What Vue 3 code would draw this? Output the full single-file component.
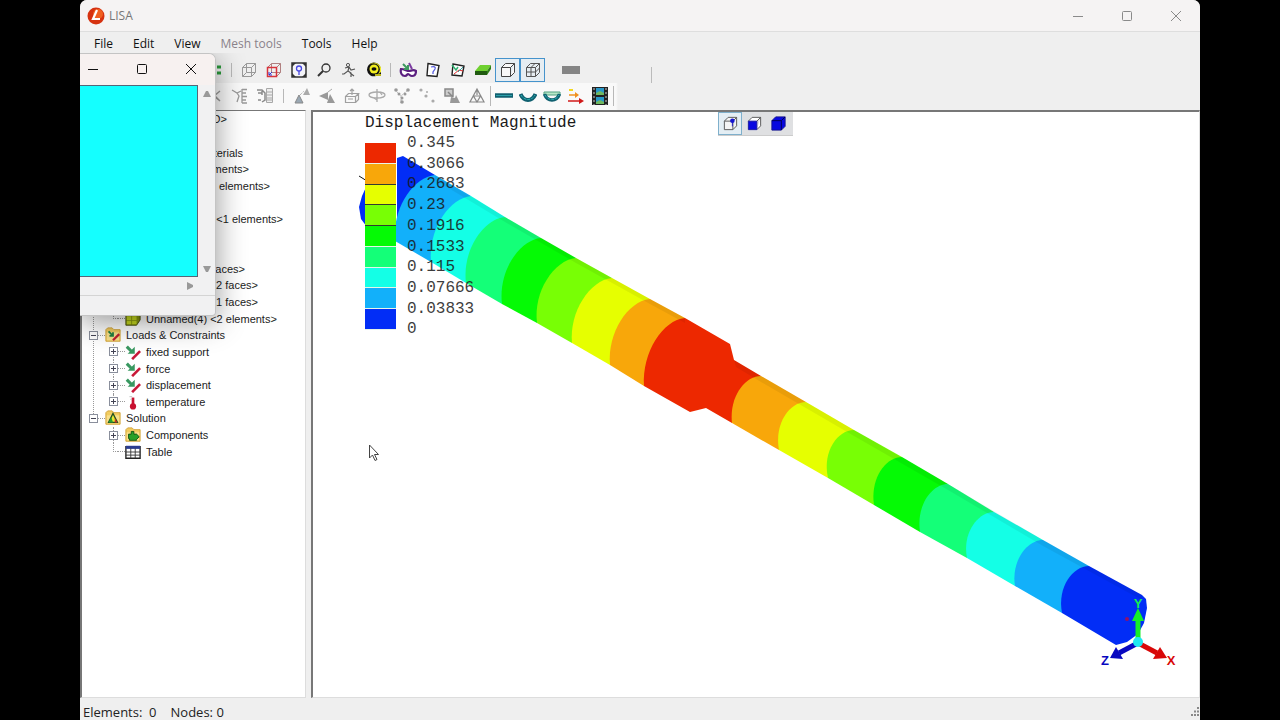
<script setup>
const menus = ['File', 'Edit', 'View', 'Mesh tools', 'Tools', 'Help']

const rowOne = [
  [{ id: 'refresh', t: 'Refresh' }],
  [
    { id: 'wire', t: 'Wireframe' }, { id: 'wireface', t: 'Select faces' }, { id: 'fit', t: 'Fit to window' },
    { id: 'lens', t: 'Zoom' }, { id: 'walk', t: 'Rotate' }, { id: 'tape', t: 'Tape measure' }
  ],
  [
    { id: 'mask', t: 'Show hidden' }, { id: 'nodeq', t: 'Node query' }, { id: 'elemq', t: 'Element query' },
    { id: 'slab', t: 'Shell thickness' }, { id: 'cube', t: 'Element surfaces', on: true }, { id: 'cubegrid', t: 'Element edges', on: true }
  ]
]
const rowTwo = [
  [{ id: 'cross', t: 'Delete' }, { id: 'split', t: 'Split' }, { id: 'list', t: 'List' }],
  [
    { id: 'tris', t: 'Move' }, { id: 'mirror', t: 'Mirror' }, { id: 'extrude', t: 'Extrude' }, { id: 'revolve', t: 'Revolve' },
    { id: 'merge', t: 'Merge nodes' }, { id: 'dots', t: 'Nodes' }, { id: 'scale', t: 'Scale' }, { id: 'refine', t: 'Refine' }
  ]
]
const results = [
  { id: 'flat', t: 'Undeformed' }, { id: 'bent', t: 'Deformed' }, { id: 'both', t: 'Both shapes' },
  { id: 'vectors', t: 'Vectors' }, { id: 'film', t: 'Animate' }
]
const viewModes = [{ id: 'pick', t: 'Select nodes', on: true }, { id: 'pickface', t: 'Select faces' }, { id: 'picksolid', t: 'Select elements' }]

const tree = [
  { tail: 'Analysis <3D>', end: 145 },
  {},
  { tail: 'Materials', end: 161 },
  { tail: '<2 elements>', end: 167 },
  { tail: '<8 elements>', end: 188 },
  {},
  { tail: '<1 elements>', end: 201 },
  {},
  {},
  { tail: '<3 faces>', end: 163 },
  { tail: '<2 faces>', end: 176 },
  { tail: '<1 faces>', end: 176 },
  { label: 'Unnamed(4) <2 elements>', icon: 'elems', level: 1, last: true },
  { label: 'Loads & Constraints', icon: 'loads', level: 0, box: '-' },
  { label: 'fixed support', icon: 'arrow', level: 1, box: '+' },
  { label: 'force', icon: 'arrow', level: 1, box: '+' },
  { label: 'displacement', icon: 'arrow', level: 1, box: '+' },
  { label: 'temperature', icon: 'thermo', level: 1, box: '+', last: true },
  { label: 'Solution', icon: 'solution', level: 0, box: '-' },
  { label: 'Components', icon: 'comp', level: 1, box: '+' },
  { label: 'Table', icon: 'table', level: 1, last: true }
]

const C = {
  red: '#ed2800', orange: '#f8a70a', yellow: '#e6ff00', lime: '#78ff05', green: '#05fa05',
  spring: '#14ff78', cyan: '#14ffe6', sky: '#12b0fa', blue: '#022df6'
}
const swatches = [C.red, C.orange, C.yellow, C.lime, C.green, C.spring, C.cyan, C.sky, C.blue]
const values = ['0.345', '0.3066', '0.2683', '0.23', '0.1916', '0.1533', '0.115', '0.07666', '0.03833', '0']

// Contour boundaries along the shaft: colour, top point, bottom point.
const thick = [
  [C.sky, 434, 174, 394, 240], [C.cyan, 470, 195, 430, 261], [C.spring, 504, 216, 465, 282],
  [C.green, 540, 237, 501, 303], [C.lime, 575, 257, 536, 322], [C.yellow, 611, 277, 571, 342],
  [C.orange, 649, 298, 609, 364], [C.red, 684, 317, 643, 385]
]
const thin = [
  [C.orange, 760, 375, 731, 422], [C.yellow, 805, 401, 778, 449], [C.lime, 853, 429, 827, 477],
  [C.green, 901, 456, 873, 504], [C.spring, 947, 483, 919, 531], [C.cyan, 993, 511, 966, 557],
  [C.sky, 1042, 539, 1014, 585], [C.blue, 1088, 565, 1061, 612]
]
const band = (list, tailPath, a, b) =>
  list.map(([color, tx, ty, bx, by], i) => {
    const n = list[i + 1]
    const rest = n ? `L${n[3]} ${n[4]}L${n[1]} ${n[2]}Z` : tailPath
    return { color, d: `M${tx} ${ty}C${tx - a[0]} ${ty + a[1]} ${tx - b[0]} ${ty + b[1]} ${bx} ${by}${rest}` }
  })
const bands = [
  { color: C.blue, d: 'M396 157L402 155L434 174L425 200L396 240Z' },
  ...band(thick, 'L689 411L705 407L731 422L760 375L733 359L729 343Z', [22, 2], [43, 34]),
  ...band(thin, 'L1115 644L1126 641L1137 633L1143 622L1146 607L1145 598L1141 594Z', [16, 0], [32, 21])
]
</script>

<template>
  <svg class="defs" aria-hidden="true">
    <defs>
      <symbol id="refresh" viewBox="0 0 18 18"><path d="M3 6h12M3 12h12" stroke="#2a9a3a" stroke-width="3" stroke-dasharray="7 1" /></symbol>
      <symbol id="wire" viewBox="0 0 18 18"><path d="M2.500 6.500h9v9h-9zM6.500 2.500h9v9h-9zM2.500 6.500l4-4M11.500 6.500l4-4M2.500 15.500l4-4M11.500 15.500l4-4" fill="none" stroke="#999" /></symbol>
      <symbol id="wireface" viewBox="0 0 18 18"><path d="M6.500 2.500h9v9h-9zM2.500 6.500l4-4M11.500 6.500l4-4M11.500 15.500l4-4" fill="none" stroke="#b08080" /><path d="M2.500 6.500h9v9h-9z" fill="none" stroke="#d8343c" stroke-width="1.500" /><path d="M4 14l3-3M4 11v3h3" fill="none" stroke="#3030d0" /></symbol>
      <symbol id="fit" viewBox="0 0 18 18"><path d="M2 2h14v14H2z" fill="#f4f4f8" stroke="#333" stroke-width="1.500" /><path d="M2 2h4L2 6zM16 2v4l-4-4zM2 16v-4l4 4zM16 16h-4l4-4z" fill="#333" /><circle cx="9" cy="7.500" r="2.500" fill="#eef" stroke="#4848e0" stroke-width="1.300" /><path d="M9 10v4" stroke="#4848e0" stroke-width="1.300" /></symbol>
      <symbol id="lens" viewBox="0 0 18 18"><circle cx="11" cy="7" r="4" fill="none" stroke="#333" stroke-width="1.300" /><path d="M8 10l-5 5" stroke="#333" stroke-width="2" /></symbol>
      <symbol id="walk" viewBox="0 0 18 18"><circle cx="8" cy="4" r="1.600" fill="none" stroke="#555" /><path d="M5 7l4-1 2 3 4-1M9 6l-1 4-4 3H2M8 10l3 2 0 4M10 12l4 3" fill="none" stroke="#555" stroke-width="1.200" /></symbol>
      <symbol id="tape" viewBox="0 0 18 18"><path d="M2 9a7 7 0 0 1 14-1v7h-5a7 7 0 0 1-9-6z" fill="#111" /><path d="M4 4a7 7 0 0 1 12 3v4a5 5 0 0 1-3 2 6 6 0 0 0-9-9z" fill="#f2ee20" /><circle cx="9" cy="8" r="4.500" fill="#f2ee20" /><ellipse cx="9" cy="8" rx="2.500" ry="1.800" fill="#111" /><path d="M10 14h6" stroke="#f2ee20" stroke-width="1.500" /></symbol>
      <symbol id="mask" viewBox="0 0 18 18"><path d="M2 8c-1 4 1 7 4 7 2 0 2-2 3-2s2 2 4 2c3 0 4-2 4-5-3-2-5 0-7 0S5 8 2 8z" fill="#fff" stroke="#5b2080" stroke-width="2.200" /><path d="M4 3l5 5M9 4v4H5" fill="none" stroke="#3e9860" stroke-width="2" /><path d="M10 2l3 6" stroke="#7a3aa0" stroke-width="2" /></symbol>
      <symbol id="nodeq" viewBox="0 0 18 18"><path d="M4 2.500l11 2-2 11-10-1z" fill="#fff" stroke="#222" stroke-width="1.400" /><path d="M7 6c3-1 5 0 4 2l-2 3v2" fill="none" stroke="#5a60e0" stroke-width="1.300" /></symbol>
      <symbol id="elemq" viewBox="0 0 18 18"><path d="M4 3l11 2-2 10-10-1z" fill="#fff" stroke="#222" stroke-width="1.400" /><path d="M3 4l4 5 2-3" fill="none" stroke="#30b070" stroke-width="1.500" /><path d="M5 13l5-4 4 1" fill="none" stroke="#e03030" /><path d="M9 11l5-5" stroke="#3aa0a0" /></symbol>
      <symbol id="slab" viewBox="0 0 18 18"><path d="M1 10l5-6h11l-4 6z" fill="#6fd030" /><path d="M1 10h12v4H1z" fill="#205a10" /><path d="M13 10l4-6v4l-4 6z" fill="#2f8018" /></symbol>
      <symbol id="cube" viewBox="0 0 18 18"><path d="M2.500 6.500h9v9h-9zM2.500 6.500l4-4h9l-4 4M15.500 2.500v9l-4 4" fill="#f8f8f8" stroke="#444" /></symbol>
      <symbol id="cubegrid" viewBox="0 0 18 18"><path d="M2.500 6.500h9v9h-9zM2.500 6.500l4-4h9l-4 4M15.500 2.500v9l-4 4M7 6.500v9M2.500 11h9M7 6.500l4-4M11.500 11l4-4" fill="none" stroke="#555" /></symbol>
      <symbol id="cross" viewBox="0 0 18 18"><path d="M4 4l10 10M14 4L8 9l6 5" stroke="#999" stroke-width="1.400" fill="none" /></symbol>
      <symbol id="split" viewBox="0 0 18 18"><path d="M1 3l5 3 4-2M6 6l2 3-2 6M11 2v14M11 2.500h5M11 6h4M11 9.500h5M11 13h4M11 16h5" stroke="#999" fill="none" stroke-width="1.300" /></symbol>
      <symbol id="list" viewBox="0 0 18 18"><path d="M1 3h5l3 3v7l-3 2M2 6h4M5 13H2M6 4v4" stroke="#8a8a8a" fill="none" stroke-width="1.500" /><path d="M10.500 1.500h6v14h-6zM11 5h5M11 8h5M11 11h5M11 13h5" fill="#eee" stroke="#a8a8a8" /></symbol>
      <symbol id="tris" viewBox="0 0 18 18"><path d="M2 16l4-8 4 8z" fill="#9aa8b4" stroke="#888" /><path d="M10 8l4-7 3 7z" fill="#aaa" /><path d="M7 8l4-4" stroke="#999" stroke-dasharray="1 1" /></symbol>
      <symbol id="mirror" viewBox="0 0 18 18"><path d="M1 9l9-4v8z" fill="#999" /><path d="M9 16l3-9 5 9z" fill="#999" /><path d="M10 5l4-3" stroke="#aaa" /></symbol>
      <symbol id="extrude" viewBox="0 0 18 18"><path d="M2.500 9.500h10v6h-10zM2.500 9.500l3-3h10l-3 3M15.500 6.500v6l-3 3M5 12h5M9 2v6M7 4l2-2 2 2" fill="none" stroke="#a0a0a0" stroke-width="1.200" /></symbol>
      <symbol id="revolve" viewBox="0 0 18 18"><ellipse cx="9" cy="8" rx="8" ry="3" fill="none" stroke="#aaa" stroke-width="1.300" /><path d="M9 2v13M6 11l3 2M12 5l2 3" stroke="#aaa" stroke-width="1.300" /></symbol>
      <symbol id="merge" viewBox="0 0 18 18"><path d="M2 3l6 6 7-6M8 9v7" stroke="#bbb" stroke-dasharray="2 1" fill="none" /><g fill="#999"><circle cx="3" cy="3" r="1.800" /><circle cx="15" cy="3" r="1.800" /><circle cx="6" cy="7" r="1.500" /><circle cx="12" cy="7" r="1.500" /><circle cx="9" cy="11" r="1.500" /><circle cx="9" cy="15" r="1.800" /></g></symbol>
      <symbol id="dots" viewBox="0 0 18 18"><g fill="#aaa"><circle cx="3" cy="3" r="1.600" /><circle cx="8" cy="9" r="1.600" /><circle cx="9" cy="5" r="1" /><circle cx="15" cy="14" r="1.600" /></g></symbol>
      <symbol id="scale" viewBox="0 0 18 18"><path d="M2 2h8v7H2z" fill="#ccc" stroke="#888" stroke-width="1.500" /><path d="M5 5l5 5" stroke="#888" stroke-width="1.500" /><path d="M7 16l1-6 4 1 1-3 4 8z" fill="#999" /></symbol>
      <symbol id="refine" viewBox="0 0 18 18"><path d="M9 2l7 13H2zM5.500 9h7L9 15zM9 2v6" fill="none" stroke="#888" stroke-width="1.200" /></symbol>
      <symbol id="flat" viewBox="0 0 18 18"><path d="M0 8.500h18" stroke="#116070" stroke-width="4.500" /><path d="M1 8.500h16" stroke="#2aa0a8" /></symbol>
      <symbol id="bent" viewBox="0 0 18 18"><path d="M1.500 7c3 8 12 8 15 0" fill="none" stroke="#106070" stroke-width="4" /><path d="M2 8c3 6 11 6 14 0" fill="none" stroke="#30b8b8" stroke-dasharray="3 1" /></symbol>
      <symbol id="both" viewBox="0 0 18 18"><path d="M1 5h16v3H1z" fill="#b8e8c8" stroke="#50a080" /><path d="M1.500 7c3 8 12 8 15 0" fill="none" stroke="#106070" stroke-width="3.500" /><path d="M2 8c3 6 11 6 14 0" fill="none" stroke="#30b8b8" stroke-dasharray="3 1" /></symbol>
      <symbol id="vectors" viewBox="0 0 18 18"><path d="M2 3h4" stroke="#f2d820" stroke-width="2" /><path d="M2 8h7" stroke="#f09020" stroke-width="1.500" /><path d="M8 5l4 3-4 3z" fill="#f09020" /><path d="M1 14h12" stroke="#d01818" stroke-width="1.500" /><path d="M12 11l5 3-5 3z" fill="#d01818" /></symbol>
      <symbol id="film" viewBox="0 0 18 18"><path d="M1 0h16v18H1z" fill="#222" /><path d="M5 1h8v7H5zM5 10h8v7H5z" fill="#2898c8" /><path d="M5 6l4-2 4 2v2H5zM5 15l4-2 4 2v2H5z" fill="#70b860" /><path d="M3 1v17M15 1v17" stroke="#ccc" stroke-width="1" stroke-dasharray="2 2" /></symbol>
      <symbol id="pick" viewBox="0 0 18 18"><path d="M2.500 6.500h9v9h-9zM2.500 6.500l4-4h9l-4 4M15.500 2.500v9l-4 4" fill="#f4f4f4" stroke="#555" /><path d="M11 7v5" stroke="#2020c0" /><circle cx="11" cy="6" r="2.400" fill="#1515d0" /></symbol>
      <symbol id="pickface" viewBox="0 0 18 18"><path d="M2.500 6.500l4-4h9l-4 4M15.500 2.500v9l-4 4" fill="#fff" stroke="#555" /><path d="M2.500 6.500h9v9h-9z" fill="#0808e0" stroke="#1818a0" /></symbol>
      <symbol id="picksolid" viewBox="0 0 18 18"><path d="M2 6l4-4h10v10l-4 4H2z" fill="#0808e0" stroke="#111090" /><path d="M2 6h10v10M12 6l4-4" stroke="#000050" fill="none" /></symbol>
      <symbol id="folder" viewBox="0 0 18 18"><path d="M1 3l2-2h5l2 2h7v13H1z" fill="#f2cc60" stroke="#d0a030" /><path d="M2 6h14v9H2z" fill="#f9e08c" /></symbol>
      <symbol id="loads" viewBox="0 0 18 18"><use href="#folder" /><path d="M4 5l5 5M9 6v4H5" stroke="#208040" stroke-width="2" fill="none" /><path d="M9 15l7-7" stroke="#c02030" stroke-width="2.500" /></symbol>
      <symbol id="arrow" viewBox="0 0 18 18"><path d="M2 3l6 6" stroke="#389860" stroke-width="3.500" /><path d="M11 3v8H3z" fill="#389860" /><path d="M8 17l9-9" stroke="#c81838" stroke-width="3" /></symbol>
      <symbol id="thermo" viewBox="0 0 18 18"><path d="M9 4v9" stroke="#c81030" stroke-width="3" /><circle cx="9" cy="14" r="3.500" fill="#c81030" /><path d="M5 3h3M6 6h2" stroke="#bbb" /></symbol>
      <symbol id="solution" viewBox="0 0 18 18"><use href="#folder" /><path d="M9 4l5 10H4z" fill="#e8e830" stroke="#205020" stroke-width="1.500" /><path d="M4 14l3-6 2 6z" fill="#28a030" /><path d="M11 9l3 5h-3z" fill="#d03020" /></symbol>
      <symbol id="comp" viewBox="0 0 18 18"><use href="#folder" /><path d="M4 8h3V5h3v3h3l3 3-3 3v1H5v-2H4z" fill="#28a028" stroke="#105010" /></symbol>
      <symbol id="table" viewBox="0 0 18 18"><path d="M1 3h16v13H1z" fill="#fff" stroke="#222" stroke-width="1.500" /><path d="M1 2h16v3.500H1z" fill="#2a3c90" /><path d="M1 9h16M1 12.500h16M6.500 5v11M11.500 5v11" stroke="#333" /></symbol>
      <symbol id="elems" viewBox="0 0 18 18"><path d="M1 5l3-3h13v8l-4 6H1z" fill="#8a9a10" stroke="#444c08" /><path d="M2 6h5v4H2zM8 6h5v4H8zM2 11h5v4H2zM8 11h5v4H8z" fill="#c8dc20" /></symbol>
    </defs>
  </svg>

  <div class="desktop">
    <main class="window">
      <header class="titlebar">
        <svg class="logo" viewBox="0 0 18 18"><circle cx="9" cy="9" r="8.500" fill="#d63210" /><circle cx="11" cy="7" r="5" fill="#f06020" /><path d="M10 3L6 12h7" fill="none" stroke="#fff" stroke-width="2.200" /></svg>
        <h1>LISA</h1>
        <div class="caption">
          <button aria-label="Minimize"><svg viewBox="0 0 12 12"><path d="M1 6.500h10" /></svg></button>
          <button aria-label="Maximize"><svg viewBox="0 0 12 12"><rect x="1.500" y="1.500" width="9" height="9" rx="1" /></svg></button>
          <button aria-label="Close"><svg viewBox="0 0 12 12"><path d="M1 1l10 10M11 1L1 11" /></svg></button>
        </div>
      </header>

      <nav class="menu">
        <button v-for="m in menus" :key="m" :disabled="m === 'Mesh tools'">{{ m }}</button>
      </nav>

      <div class="toolbar">
        <template v-for="(g, i) in rowOne" :key="i">
          <span v-if="i" class="sep"></span>
          <button v-for="b in g" :key="b.id" :class="{ on: b.on }" :aria-label="b.t"><svg><use :href="'#' + b.id" /></svg></button>
        </template>
        <span class="thumb"></span>
        <span class="edge"></span>
      </div>
      <div class="toolbar lower">
        <template v-for="(g, i) in rowTwo" :key="i">
          <span v-if="i" class="sep wide"></span>
          <button v-for="b in g" :key="b.id" :aria-label="b.t"><svg><use :href="'#' + b.id" /></svg></button>
        </template>
        <span class="sep tight"></span>
        <button v-for="b in results" :key="b.id" class="narrow" :aria-label="b.t"><svg><use :href="'#' + b.id" /></svg></button>
        <span class="sep tight"></span>
      </div>

      <div class="body">
        <aside class="side">
          <ul class="tree">
            <li v-for="(n, i) in tree" :key="i" :class="[n.level === 1 && 'child', n.level === 0 && 'root', n.last && 'last']">
              <span v-if="n.tail" class="tail" :style="{ width: n.end + 'px' }">{{ n.tail }}</span>
              <template v-else-if="n.label">
                <button v-if="n.box" class="box" :class="{ plus: n.box === '+' }" :aria-label="'Toggle ' + n.label"></button>
                <span v-else class="nobox"></span>
                <span class="link"></span>
                <svg class="ticon"><use :href="'#' + n.icon" /></svg>
                <span class="label">{{ n.label }}</span>
              </template>
            </li>
          </ul>
        </aside>

        <section class="view">
          <svg class="scene" viewBox="312 111 886 584" preserveAspectRatio="xMinYMin meet" role="img" aria-label="Displacement contour plot">
            <path d="M358 175l8 5" stroke="#111" />
            <path d="M366 184L361 195L358 206L360 218L366 226Z" :fill="C.blue" />
            <path v-for="(b, i) in bands" :key="i" :d="b.d" :fill="b.color" />
            <path d="M434 174L504 216L575 257L649 298L684 317V322L649 303L575 262L504 221L434 179ZM733 359L760 375L853 429L947 483L1042 539L1088 565L1141 594V599L1042 545L947 489L853 435L760 381L735 366Z" fill="#000" opacity=".06" />
            <circle cx="1126" cy="618" r="2" fill="#90106a" />
            <path d="M1137 638V618" stroke="#14ee28" stroke-width="5" /><path d="M1131 620l6-13 6 13z" fill="#14ee28" />
            <path d="M1139 643l17 9" stroke="#d80808" stroke-width="5" /><path d="M1159 646l7 11-14 1z" fill="#d80808" />
            <path d="M1135 643l-17 9" stroke="#0808c0" stroke-width="5" /><path d="M1115 646l-6 11 13 1z" fill="#0808c0" />
            <circle cx="1137" cy="641" r="5" fill="#20e8f0" />
            <text x="1137" y="607" fill="#14ee50">Y</text>
            <text x="1170" y="664" fill="#d80808">X</text>
            <text x="1104" y="664" fill="#0808c0">Z</text>
          </svg>

          <div class="legend">
            <h2>Displacement Magnitude</h2>
            <div class="scale">
              <div class="swatches">
                <i v-for="(s, i) in swatches" :key="s" :class="{ dark: i > 0 && i < 4 }" :style="{ background: s }"></i>
              </div>
              <ol><li v-for="v in values" :key="v">{{ v }}</li></ol>
            </div>
          </div>

          <div class="modes">
            <button v-for="b in viewModes" :key="b.id" :class="{ on: b.on }" :aria-label="b.t"><svg><use :href="'#' + b.id" /></svg></button>
          </div>

          <svg class="cursor" viewBox="0 0 12 18"><path d="M1.500 1v13l3-3 2.500 5.500 2-1L6.500 10.500h4z" fill="#fff" stroke="#444" /></svg>
        </section>
      </div>

      <footer class="status">
        <span>Elements:&nbsp; 0</span><span>Nodes: 0</span>
        <svg viewBox="0 0 12 12"><path d="M9 2h2M6 5.500h2M9 5.500h2M3 9h2M6 9h2M9 9h2" stroke="#888" stroke-width="2" /></svg>
      </footer>

      <section class="popup" aria-label="Color window">
        <div class="popbar">
          <button aria-label="Minimize"><svg viewBox="0 0 12 12"><path d="M1 6.500h10" /></svg></button>
          <button aria-label="Maximize"><svg viewBox="0 0 12 12"><rect x="1.500" y="1.500" width="9" height="9" rx="1" /></svg></button>
          <button aria-label="Close"><svg viewBox="0 0 12 12"><path d="M1 1l10 10M11 1L1 11" /></svg></button>
        </div>
        <div class="popbody">
          <div class="fill"></div>
          <div class="vscroll">
            <svg viewBox="0 0 10 8"><path d="M1 7l3-6h2l3 6z" /></svg>
            <svg viewBox="0 0 10 8"><path d="M1 1h8L6 7H4z" /></svg>
          </div>
        </div>
        <div class="hscroll"><svg viewBox="0 0 8 10"><path d="M1 1l6 3v2L1 9z" /></svg></div>
        <div class="popfoot"></div>
      </section>
    </main>
  </div>
</template>

<style>
body { margin: 0; background: #000; }
</style>

<style scoped>
* { box-sizing: border-box; }
button { border: 0; padding: 0; margin: 0; background: none; font: inherit; color: inherit; }
.defs { position: absolute; width: 0; height: 0; }
.desktop { min-height: 100vh; display: flex; padding: 0 80px; background: #000; font-family: "Open Sans", "Noto Sans", sans-serif; font-size: 12px; color: #222; }
.window { position: relative; flex: 1; min-width: 0; display: flex; flex-direction: column; background: #efefef; border-radius: 7px 7px 0 0; overflow: hidden; }
.titlebar { display: flex; align-items: center; height: 32px; padding-left: 7px; background: #f5f3f3; border-bottom: 1px solid #dedede; }
.logo { width: 18px; height: 18px; }
h1 { margin: 0 0 0 4px; font-size: 12px; font-weight: 400; color: #777; }
.caption { margin-left: auto; display: flex; }
.caption button { width: 49px; height: 31px; display: grid; place-items: center; }
.caption svg, .popbar svg { width: 12px; height: 12px; fill: none; stroke: #8a8a8a; }
.menu { display: flex; height: 25px; padding: 0 0 2px 4px; align-items: center; }
.menu button { padding: 0 10px; color: #111; line-height: 20px; }
.menu button:disabled { color: #8a828a; }
.toolbar { display: flex; align-items: center; height: 26px; padding-left: 122px; }
.toolbar.lower { height: 27px; padding-bottom: 2px; background: linear-gradient(90deg, #f9f9f9 536px, #efefef 538px); }
.toolbar button { width: 25px; height: 24px; display: grid; place-items: center; flex: none; }
.toolbar button.narrow { width: 24px; }
.toolbar svg, .modes svg { width: 18px; height: 18px; }
.toolbar button.on { border: 1px solid #4593cc; background: #e6edf2; }
.sep { width: 9px; height: 14px; flex: none; background: linear-gradient(#b8b8b8, #b8b8b8) center / 1px 100% no-repeat; }
.sep.wide { width: 12px; }
.sep.tight { width: 3px; height: 20px; }
.thumb { width: 18px; height: 8px; margin-left: 17px; background: #858585; }
.edge { width: 1px; height: 16px; margin-left: 71px; background: #bbb; align-self: flex-end; }
.body { flex: 1; display: flex; }
.side { width: 226px; flex: none; border: solid #777; border-width: 1px 1px 1px 2px; border-right-color: #ddd; border-bottom-color: #ddd; background: #fff; }
.tree { position: relative; list-style: none; margin: 0; padding: 0; height: 349px; display: grid; grid-auto-rows: 1fr; font-family: "Liberation Sans", Arial, sans-serif; font-size: 11px; color: #1c1c1c; }
.tree::before { content: ""; position: absolute; left: 11px; top: 0; bottom: 42px; border-left: 1px dotted #999; }
.tree li { position: relative; display: flex; align-items: center; min-height: 0; padding-left: 7px; white-space: nowrap; }
.tree li.child { padding-left: 27px; }
.tree li.child::before { content: ""; position: absolute; left: 31px; top: 0; bottom: 0; border-left: 1px dotted #999; }
.tree li.last::before { bottom: 50%; }
.tail { text-align: right; margin-left: -7px; }
.box { position: relative; width: 9px; height: 9px; border: 1px solid #8a8f9c; background: linear-gradient(#445, #445) center / 5px 1px no-repeat #fff; }
.box.plus { background: linear-gradient(#445, #445) center / 5px 1px no-repeat, linear-gradient(#445, #445) center / 1px 5px no-repeat, #fff; }
.nobox { width: 5px; margin-left: 4px; border-top: 1px dotted #999; }
.link { width: 7px; border-top: 1px dotted #999; }
.ticon { width: 16px; height: 16px; margin-right: 5px; flex: none; }
.view { position: relative; flex: 1; margin-left: 5px; border: solid #777; border-width: 2px 1px 1px 2px; border-right-color: #ddd; border-bottom-color: #ddd; background: #fff; overflow: hidden; }
.scene { position: absolute; inset: 0; width: 100%; height: 100%; }
.scene text { font: bold 13px "Liberation Sans", Arial, sans-serif; text-anchor: middle; }
.legend { position: absolute; left: 52px; top: 1px; font-family: "Liberation Mono", "Courier New", monospace; font-size: 16px; color: #1a1a1a; }
.legend h2 { margin: 0; font-size: 16px; font-weight: 400; line-height: 20px; }
.scale { display: flex; }
.swatches { width: 31px; height: 187px; margin-top: 10px; display: grid; grid-auto-rows: 1fr; }
.swatches i { border-bottom: 1px solid #e8f4e8; }
.swatches i.dark { border-bottom-color: #333a30; }
.legend ol { list-style: none; margin: 0 0 0 11px; padding: 0; height: 207px; display: grid; grid-auto-rows: 1fr; line-height: 20px; opacity: .85; }
.modes { position: absolute; left: 405px; top: 0; display: flex; background: #dfe0e2; padding-right: 3px; border-bottom: 1px solid #ccc; }
.modes button { width: 24px; height: 23px; display: grid; place-items: center; }
.modes button.on { border: 1px solid #7fb0cc; background: #e4eef4; }
.modes svg { width: 17px; height: 17px; }
.cursor { position: absolute; left: 55px; top: 332px; width: 12px; height: 18px; }
.status { display: flex; align-items: center; gap: 14px; height: 22px; padding: 5px 0 0 3px; font-size: 13px; line-height: 16px; }
.status svg { width: 12px; height: 12px; margin-left: auto; }
.popup { position: absolute; left: 0; top: 53px; width: 136px; background: #f1f1f2; border: solid #c4c4c4; border-width: 1px 1px 1px 0; border-radius: 0 7px 4px 0; box-shadow: 0 6px 30px rgba(0, 0, 0, .42); clip-path: inset(0 -40px -40px 0); }
.popbar { display: flex; justify-content: flex-end; height: 31px; padding-bottom: 1px; background: #f7f1f0; border-radius: 0 6px 0 0; }
.popbar button { width: 49px; display: grid; place-items: center; flex: none; }
.popbar svg { stroke: #111; }
.popbody { display: flex; height: 192px; }
.fill { flex: 1; background: #14ffff; border: solid #567; border-width: 1px 1px 1px 0; }
.vscroll { width: 17px; display: flex; flex-direction: column; justify-content: space-between; align-items: center; padding: 5px 0 4px; }
.vscroll svg { width: 10px; height: 8px; fill: #999; }
.hscroll { height: 18px; display: flex; align-items: center; justify-content: flex-end; padding-right: 21px; }
.hscroll svg { width: 8px; height: 10px; fill: #999; }
.popfoot { height: 20px; border-top: 1px solid #d4d4d4; }
</style>
